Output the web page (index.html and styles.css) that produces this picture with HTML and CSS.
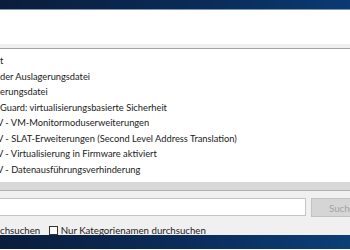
FILE: index.html
```html
<!DOCTYPE html>
<html lang="de">
<head>
    <meta charset="UTF-8">
    <title>Systeminformationen</title>
    <link rel="stylesheet" href="styles.css">
</head>
<body>
    <div class="titlebar"></div>
    <div class="toolbar"></div>
    <div class="splitter"></div>
    <ul class="items">
        <li>t</li>
        <li>der Auslagerungsdatei</li>
        <li>erungsdatei</li>
        <li>Guard: virtualisierungsbasierte Sicherheit</li>
        <li class="cut">V - VM-Monitormoduserweiterungen</li>
        <li class="cut">V - SLAT-Erweiterungen (Second Level Address Translation)</li>
        <li class="cut">V - Virtualisierung in Firmware aktiviert</li>
        <li class="cut">V - Datenausführungsverhinderung</li>
    </ul>
    <div class="search">
        <div class="search-row">
            <input type="text" class="search-box">
            <button class="search-btn" disabled>Suchen</button>
        </div>
        <div class="options">
            <span class="opt-first">chsuchen</span>
            <label class="opt"><span class="check"></span>Nur <u>K</u>ategorienamen durchsuchen</label>
        </div>
    </div>
    <div class="taskbar"></div>
</body>
</html>
```

FILE: styles.css
```css
/* Page */
body {
    margin: 0;
    width: 350px;
    height: 250px;
    overflow: hidden;
    background: #fff;
    font-family: "Lato", "Noto Sans", sans-serif;
    font-size: 10px;
    color: #1a1a1a;
}

/* Window title bar (dark desktop blue) */
.titlebar {
    height: 9px;
    background: linear-gradient(90deg, #0b1d3a, #0a2c5a 60%, #0a3a73);
    border-bottom: 1px solid #7d97b3;
}

.toolbar {
    height: 34px;
    background: #fff;
}

.splitter {
    height: 4px;
    background: #f0f0f0;
    border-bottom: 1px solid #a4a4a4;
}

/* Item list */
.items {
    list-style: none;
    margin: 0;
    padding: 4px 0 0 0;
    height: 129px;
    overflow: hidden;
    background: #fff;
    font-size: 9.3px;
}

.items li {
    line-height: 15.5px;
    white-space: nowrap;
}

.items li.cut {
    margin-left: -3px;
}

/* Search area */
.search {
    background: #f0f0f0;
    border-top: 8px solid #d8d8d8;
    height: 45px;
    box-shadow: inset 0 1px 0 #b0b0b0;
}

.search-row {
    display: flex;
    gap: 5px;
    padding-top: 8px;
    overflow: hidden;
}

.search-box {
    flex: none;
    width: 306px;
    height: 18px;
    margin: 0;
    padding: 0;
    border: 1px solid #c4c4c4;
    border-left: none;
    background: #fff;
    box-sizing: border-box;
    outline: none;
}

.search-btn {
    flex: none;
    width: 39px;
    height: 19px;
    padding: 0 0 0 17px;
    border: 1px solid #c2c2c2;
    border-right: none;
    background: #d5d5d5;
    color: #a3a3a3;
    font-family: inherit;
    font-size: 9.7px;
    text-align: left;
    white-space: nowrap;
    overflow: hidden;
}

.options {
    margin-top: 6px;
    line-height: 14px;
    white-space: nowrap;
    font-size: 9.7px;
}

.opt {
    margin-left: 6px;
}

.check {
    display: inline-block;
    width: 7px;
    height: 7px;
    border: 1px solid #333;
    background: #fff;
    margin-right: 3px;
    vertical-align: -1px;
}

.taskbar {
    height: 14px;
    background: linear-gradient(90deg, #0a1d3c, #0b2d5c 55%, #0c3e78);
}
```
